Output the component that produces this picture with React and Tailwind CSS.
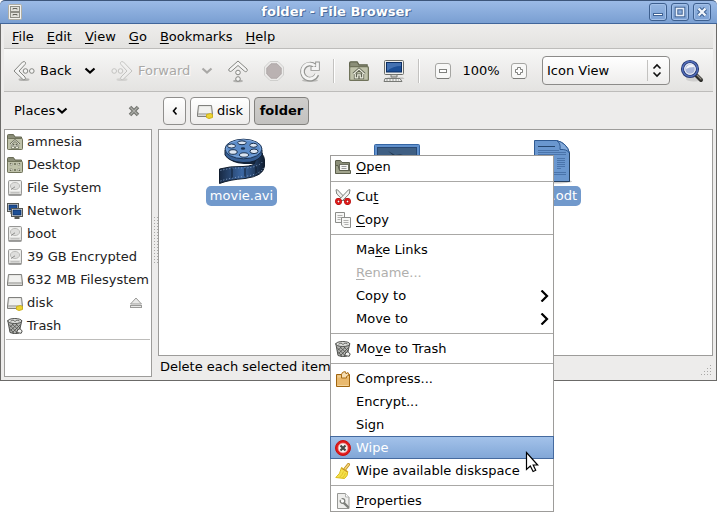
import React from 'react';

const INK = '#555753';

function Chevron({ dir = 'down', className = '' }) {
  const d = dir === 'down' ? 'M1.5 3.5 6 7.5 10.5 3.5' : dir === 'left' ? 'M7.5 2.5 4.500 6 7.5 9.5' : 'M4.500 0.5 10 6 4.500 11.5';
  return (
    <svg width="12" height="12" viewBox="0 0 12 12" fill="none" stroke="currentColor" strokeWidth={dir === 'left' ? 1.6 : 2.2} className={'shrink-0 ' + className}>
      <path d={d} />
    </svg>
  );
}

function ArrowIcon({ flip, faded }) {
  return (
    <svg width="24" height="24" viewBox="0 0 24 24" className={'shrink-0 ' + (flip ? '-scale-x-100 ' : '') + (faded ? 'opacity-40' : '')}>
      <ellipse cx="12" cy="20.5" rx="5.500" ry="1.500" fill="#8f8f8c" opacity=".6" />
      <path d="M2 12 10.500 3Q12.500 1.800 13.500 3.500 13.800 4.800 13 5.500L7 12 13 18Q14 19.500 12.800 20.500 11.500 21 10.500 20Z" fill="#f4f4f3" stroke="#858682" strokeLinejoin="round" />
      <circle cx="13.500" cy="12" r="2.300" fill="#f4f4f3" stroke="#858682" />
      <circle cx="19.800" cy="12" r="2.300" fill="#f4f4f3" stroke="#858682" />
    </svg>
  );
}

function UpIcon() {
  return (
    <svg width="22" height="24" viewBox="0 0 22 24">
      <ellipse cx="11" cy="22" rx="5" ry="1.300" fill="#8f8f8c" opacity=".6" />
      <path d="M11 2 20 10Q20.800 12 19.500 12.600 18.300 13 17.300 12L11 6.500 4.700 12Q3.200 13 2.200 12 1.300 11 2 10Z" fill="#f4f4f3" stroke="#858682" strokeLinejoin="round" />
      <circle cx="11" cy="13.500" r="2.300" fill="#f4f4f3" stroke="#858682" />
      <circle cx="11" cy="20" r="2.300" fill="#f4f4f3" stroke="#858682" />
    </svg>
  );
}

function StopIcon() {
  return (
    <svg width="20" height="24" viewBox="0 0 20 24">
      <path d="M6 2.500h8l5.500 5.500v8L14 21.500H6L.5 16V8Z" fill="#ecebea" stroke="#cfcfcd" />
      <path d="M7 4.800h6l4.200 4.200v6L13 19.200H7L2.800 15V9Z" fill="#bab2b2" stroke="#b0a9a9" />
    </svg>
  );
}

function ReloadIcon() {
  return (
    <svg width="22" height="24" viewBox="0 0 22 24">
      <ellipse cx="11" cy="21.500" rx="8" ry="1.500" fill="#8f8f8c" opacity=".5" />
      <path d="M16 7A7.500 7.500 0 1 0 18 15.500M18.500 2.500v7h-7" fill="none" stroke="#929390" strokeWidth="4.600" />
      <path d="M16 7A7.500 7.500 0 1 0 17.800 15M18.500 3.500v6h-6" fill="none" stroke="#f5f5f4" strokeWidth="2.800" />
    </svg>
  );
}

function FolderShape({ children, size = 16 }) {
  return (
    <svg width={size} height={size} viewBox="0 0 16 16" className="shrink-0">
      <path d="M.5 14.500V1.500Q.5.600 1.400.6h5.100L8 3h6.500v11.500Z" fill="#8b8e78" stroke="#62654f" />
      <rect x=".5" y="4.500" width="15" height="11" rx=".8" fill="#bfc2aa" stroke="#70735b" />
      {children}
    </svg>
  );
}

function HomeFolder({ size }) {
  return (
    <FolderShape size={size}>
      <path d="M3.500 10.500 8 6.500l4.500 4M5 10V13.500h2V11h2v2.500h2V10" fill="none" stroke="#5d6050" strokeWidth="2.200" />
      <path d="M3.500 10.500 8 6.500l4.500 4M5 10V13.500h2V11h2v2.500h2V10" fill="none" stroke="#eceddf" strokeWidth="1" />
    </FolderShape>
  );
}

function DesktopFolder() {
  return (
    <FolderShape>
      <path d="M4 8.500V7h1.500M10.500 7H12v1.500M12 11.500V13h-1.500M5.500 13H4v-1.500M7.300 7h1.400M7.300 13h1.400" fill="none" stroke="#62654f" strokeWidth="2.200" />
      <path d="M4 8.500V7h1.500M10.500 7H12v1.500M12 11.500V13h-1.500M5.500 13H4v-1.500" fill="none" stroke="#f0f1e6" />
    </FolderShape>
  );
}

function HardDisk() {
  return (
    <svg width="16" height="16" viewBox="0 0 16 16" className="shrink-0">
      <rect x="1.500" y=".5" width="13" height="14.500" rx="1.200" fill="#e2e2e0" stroke="#979795" />
      <rect x="2.500" y="1.500" width="11" height="9.500" fill="#f3f3f1" />
      <ellipse cx="8" cy="6" rx="4.600" ry="3.600" fill="#dededc" stroke="#bcbcb9" />
      <path d="M4 9.500 8 6.800" stroke="#8c8c8a" />
      <path d="M1.500 15h13" stroke="#747472" />
      <path d="M3.500 12.800h9" stroke="#b5b5b2" />
    </svg>
  );
}

function Drive({ usb }) {
  return (
    <svg width="16" height="16" viewBox="0 0 16 16" className="shrink-0">
      <path d="M1.500 2.500h13l1 8.500v2.500h-15V11Z" fill="#d8d8d5" stroke="#80807d" />
      <path d="M2.500 3.500h11l.6 6.500H1.900Z" fill="#f1f1ef" />
      <path d="M1 11h14" stroke="#a2a29f" />
      {usb && <path d="M9.500 11.500 13.500 10.500 15.500 11.500v3L12 15.500 9.500 14.500Z" fill="#ecd433" stroke="#cdb01c" />}
    </svg>
  );
}

function Screen({ x, y }) {
  return (
    <g transform={`translate(${x} ${y})`}>
      <rect x=".5" y=".5" width="11" height="8" fill="#e8e8e4" stroke={INK} />
      <rect x="2" y="2" width="8" height="5" fill="#1d4f96" stroke="#0c2e62" strokeWidth=".8" />
      <path d="M3.500 10h5" stroke={INK} strokeWidth="2" />
    </g>
  );
}

function NetworkIcon() {
  return (
    <svg width="16" height="16" viewBox="0 0 16 16" className="shrink-0">
      <Screen x={0} y={0} />
      <Screen x={4} y={5} />
    </svg>
  );
}

function ComputerIcon() {
  return (
    <svg width="22" height="24" viewBox="0 0 22 24">
      <path d="M4 18.500h16l1.500 1.500H7Z" fill="#a4a4a1" opacity=".6" />
      <rect x="1.500" y="1.500" width="19" height="14" rx="1" fill="#eeeeec" stroke="#6b6d69" />
      <rect x="3.500" y="3.500" width="15" height="9.500" fill="#1c4f97" stroke="#0d2f63" />
      <path d="M4 4h14v3Q10 7 4 12Z" fill="#5d88c4" opacity=".6" />
      <path d="M8 15.500h6v2.500H8Z" fill="#cfcfcc" stroke="#777975" />
      <path d="M2 19.500h15l2 3H1Z" fill="#eeeeec" stroke="#777975" />
      <path d="M3 21h13" stroke="#999b97" strokeDasharray="2 1" />
    </svg>
  );
}

function TrashIcon() {
  return (
    <svg width="16" height="16" viewBox="0 0 16 16" className="shrink-0">
      <path d="M.8 2.500 3 14.500Q8 16.800 12 15L14.800 2.500Z" fill="#b4b5b2" stroke="#50514e" />
      <path d="M2 6.500l8 8M3 10.500l4 5M5 6l7 6.500M9 6l4 4M13.500 6.500l-8 8M10.500 6l-7 6.500M6.500 6l-4 3.500M13 10.500l-4 4.500" stroke="#4a4b48" strokeWidth=".8" />
      <ellipse cx="7.800" cy="3" rx="7" ry="2.500" fill="#dedfdc" stroke="#50514e" />
      <path d="M3.500 3.200 6 2l2 1.500 2-1.500 2.500 1" fill="none" stroke="#6b6c69" />
      <path d="M9.500 14.500l1.500-3 2-.8 2.200 2.300-1 2.300Z" fill="#f2f2f0" stroke="#50514e" />
    </svg>
  );
}

function EjectIcon() {
  return (
    <svg width="14" height="12" viewBox="0 0 14 12" fill="#e9e9e8" stroke="#9b9b99">
      <path d="M7 1 12.500 7h-11Z" />
      <rect x="1.500" y="8.500" width="11" height="2" />
    </svg>
  );
}

function SearchIcon() {
  return (
    <svg width="24" height="24" viewBox="0 0 24 24">
      <ellipse cx="14" cy="20" rx="8" ry="2.500" fill="#aaa" opacity=".4" />
      <path d="M16 16l5 5" stroke="#2e2e2b" strokeWidth="4" strokeLinecap="round" />
      <path d="M17 16l4 4" stroke="#8d8a82" strokeWidth="1.200" strokeLinecap="round" />
      <circle cx="10" cy="10" r="7.500" fill="#cfd8ec" stroke="#26386f" strokeWidth="3.200" />
      <circle cx="10" cy="10" r="7.500" fill="none" stroke="#5470bd" strokeWidth="1.400" />
      <circle cx="10" cy="10" r="5.200" fill="#a9b6da" stroke="#e8ecf6" />
      <path d="M6 10Q6 6 11 5.500 14 6 14 8 9 8 6 10Z" fill="#fff" opacity=".85" />
    </svg>
  );
}

function ZoomSign({ plus }) {
  return (
    <svg width="16" height="16" viewBox="0 0 16 16">
      <rect x=".5" y=".5" width="15" height="15" rx="2.500" fill="#f8f8f7" stroke="#a5a5a2" />
      <path d="M2 15.500h12" stroke="#7c7c79" />
      {plus ? (
        <path d="M6.500 4.500h3v2h2v3h-2v2h-3v-2h-2v-3h2Z" fill="#fff" stroke="#80817e" />
      ) : (
        <rect x="4.500" y="6.500" width="7" height="3" fill="#fff" stroke="#80817e" />
      )}
    </svg>
  );
}

function CabinetIcon() {
  return (
    <svg width="16" height="16" viewBox="0 0 16 16" className="shrink-0">
      <rect x="1.500" y=".5" width="13" height="15" rx="1.200" fill="#f4f4f0" stroke="#b0aea4" />
      <rect x="3.500" y="2.500" width="9" height="5" fill="#e2e2dc" stroke="#8f8f87" />
      <rect x="3.500" y="8.500" width="9" height="5" fill="#e2e2dc" stroke="#8f8f87" />
      <path d="M6 5.500v-1h4v1M6 11.500v-1h4v1" fill="none" stroke="#66665f" />
    </svg>
  );
}

function OpenIcon() {
  return (
    <svg width="16" height="16" viewBox="0 0 16 16">
      <path d="M.5 14V2Q.5 1.500 1 1.500h4.500L7 3.500h7.500V14Z" fill="#8b8e78" stroke="#5c5f4d" />
      <rect x="4.500" y="5.500" width="9" height="7" fill="#f7f7f4" stroke="#6c6e60" />
      <path d="M6.500 7.500h5M6.500 9.500h5" stroke="#999" />
      <path d="M.5 14.500V6.500h2.500l1.500 5h11v3Z" fill="#a1a48d" stroke="#5c5f4d" />
    </svg>
  );
}

function CutIcon() {
  return (
    <svg width="16" height="16" viewBox="0 0 16 16">
      <path d="M1 .8 2.500.8 11 9.800 9 12 1.800 5Z" fill="#eeeeec" stroke="#7f817d" />
      <path d="M15 .8 13.500.8 5 9.800 7 12 14.200 5Z" fill="#f5f5f4" stroke="#7f817d" />
      <circle cx="3.500" cy="12.500" r="2.200" fill="#fff" stroke="#a40000" strokeWidth="2.400" />
      <circle cx="12.500" cy="12.500" r="2.200" fill="#fff" stroke="#a40000" strokeWidth="2.400" />
      <circle cx="3.500" cy="12.500" r="2.200" fill="none" stroke="#e21c1c" strokeWidth="1.600" />
      <circle cx="12.500" cy="12.500" r="2.200" fill="none" stroke="#e21c1c" strokeWidth="1.600" />
    </svg>
  );
}

function CopyIcon() {
  return (
    <svg width="16" height="16" viewBox="0 0 16 16" fill="#f7f7f6" stroke="#8b8c89">
      <path d="M.5.5h9v10h-9Z" />
      <path d="M2.500 3.500h5M2.500 5.500h5M2.500 7.500h3" stroke="#b1b1af" />
      <path d="M6.500 5.500h9v10H9l-2.500-2.500Z" />
      <path d="M8.500 8.500h5M8.500 10.500h5M9.500 12.500h4" stroke="#b1b1af" />
    </svg>
  );
}

function CompressIcon() {
  return (
    <svg width="16" height="16" viewBox="0 0 16 16">
      <path d="M1.500 3.500h13v12h-13Z" fill="#e9b96e" stroke="#a0650f" />
      <path d="M2.500 4.500h11v2h-11Z" fill="#f0cd90" />
      <path d="M6.500 7V3.500Q7 1 9 .8h1.500l.5 2 2-1.300 1 2.500L11.500 5.500V7Z" fill="#f6dfb6" stroke="#a96d14" />
      <path d="M2.500 14.500h11" stroke="#f3d49b" />
    </svg>
  );
}

function WipeIcon() {
  return (
    <svg width="16" height="16" viewBox="0 0 16 16">
      <circle cx="8" cy="8" r="7.500" fill="#e01b1b" stroke="#c81010" />
      <circle cx="8" cy="8" r="4.900" fill="#f5f5f4" stroke="#f38a8a" strokeWidth=".8" />
      <path d="M5.500 5.500l5 5M10.500 5.500l-5 5" stroke="#484a47" strokeWidth="2.200" />
    </svg>
  );
}

function BroomIcon() {
  return (
    <svg width="16" height="16" viewBox="0 0 16 16">
      <path d="M10 6 13.500 1.500" stroke="#c08f24" strokeWidth="3" strokeLinecap="round" />
      <path d="M10 6 13.500 1.500" stroke="#f5d77c" strokeWidth="1.400" strokeLinecap="round" />
      <path d="M6.500 4.500 12.800 8.500Q13 13 9.500 15.500L.8 14.500Q5.500 11 6.500 4.500Z" fill="#f5e04a" stroke="#d9bb18" />
      <path d="M8.500 8.500Q7.500 12 4.500 14.300M10.500 10Q9.500 13 7.500 15" fill="none" stroke="#e2c628" />
      <path d="M6.500 5.300 12.500 9" stroke="#c07a2a" strokeWidth=".9" />
    </svg>
  );
}

function PropertiesIcon() {
  return (
    <svg width="16" height="16" viewBox="0 0 16 16">
      <path d="M2.500.5h8l3.500 3.500v11.500h-11.500Z" fill="#eeeeec" stroke="#969794" />
      <path d="M10.500.5v3.500h3.500" fill="#fff" stroke="#b1b2b0" />
      <path d="M8.800 9.800 13 14" stroke="#7e807c" strokeWidth="2.400" strokeLinecap="round" />
      <circle cx="7.500" cy="8" r="2.300" fill="#fff" stroke="#7e807c" strokeWidth="1.300" />
      <path d="M5 5l2 2.500" stroke="#eeeeec" strokeWidth="1.600" />
    </svg>
  );
}

function MovieIcon() {
  return (
    <svg width="48" height="48" viewBox="0 0 48 48">
      <defs>
        <linearGradient id="film" x1="0" x2="1">
          <stop offset="0" stopColor="#182a44" />
          <stop offset=".5" stopColor="#3c68a4" />
          <stop offset="1" stopColor="#101d30" />
        </linearGradient>
      </defs>
      <path d="M8 13v6q5 7 18 8l12 0 6-7 1-4Z" fill="#14243a" />
      <path d="M38 13Q46 16 46.500 23v6Q46 39 27 41.500 12 42.500 1.500 46.500V32Q12 29 25 29.500 37 29 37 25Z" fill="url(#film)" stroke="#111d2e" />
      <path d="M2.500 33.500Q13 30.500 26 31 41 30.500 45 24M2.500 44Q13 40.500 26 39.500 42 37.500 45.500 31" fill="none" stroke="#8fa9cc" strokeDasharray="1 2" />
      <path d="M14 31v10M27 31v9M38 29v8" stroke="#0f1c2e" />
      <path d="M7 13v5q4 7 18 7.500T44 18v-5Z" fill="#375f95" stroke="#122035" />
      <ellipse cx="25.500" cy="12" rx="18.500" ry="9.800" fill="#5c8cc9" stroke="#1d3556" />
      <ellipse cx="25.500" cy="11.500" rx="17" ry="8.500" fill="none" stroke="#80a8db" />
      <g fill="#dce6f3" stroke="#1b3251">
        <ellipse cx="24" cy="5.800" rx="4.300" ry="1.900" />
        <ellipse cx="35.500" cy="8.300" rx="3.800" ry="2" />
        <ellipse cx="36" cy="14.300" rx="4" ry="2.300" />
        <ellipse cx="26" cy="18" rx="4.500" ry="2.200" />
        <ellipse cx="15" cy="15" rx="4.200" ry="2.300" />
        <ellipse cx="13.500" cy="9" rx="4" ry="2" />
      </g>
      <ellipse cx="25" cy="11.500" rx="2.200" ry="1.200" fill="#1b3251" />
    </svg>
  );
}

function ImageIcon() {
  return (
    <svg width="48" height="48" viewBox="0 0 48 48">
      <rect x="1.500" y="7.500" width="45" height="36" rx="1" fill="#6090cc" stroke="#3465a4" />
      <rect x="4.500" y="10.500" width="39" height="30" fill="#3f5f83" stroke="#274874" />
      <path d="M15 14l7 4 8-1-8 3Z" fill="#22384f" />
    </svg>
  );
}

function DocumentIcon() {
  return (
    <svg width="48" height="48" viewBox="0 0 48 48">
      <ellipse cx="25" cy="44.500" rx="19" ry="2" fill="#999" opacity=".5" />
      <path d="M6.500 3.500h22Q39 6 41.500 16v28.500h-35Z" fill="#6a97cf" stroke="#2f5a92" strokeLinejoin="round" />
      <path d="M28.500 3.500Q33 6 32 12.500 39 12 41.500 16 39 6 28.500 3.500Z" fill="#83aadb" stroke="#2f5a92" />
      <path d="M41.500 16v28.500h-35" fill="none" stroke="#26405f" />
      <path d="M10 9.500h17" stroke="#25466f" />
      <path d="M10 13.500h21M10 15.500h28M10 17.500h28M10 21.500h16M10 24.500h16M29 21.500h8M29 23.500h8M29 25.500h8M29 27.500h8M29 29.500h8M29 31.500h4M10 35.500h28M10 37.500h28" stroke="#4a74ab" />
    </svg>
  );
}

function Mnemonic({ text, at = 0 }) {
  if (at < 0) return <span>{text}</span>;
  return (
    <span>
      {text.slice(0, at)}
      <span className="underline underline-offset-2">{text[at]}</span>
      {text.slice(at + 1)}
    </span>
  );
}

function WindowButton({ label, children }) {
  return (
    <button aria-label={label} className="flex size-[18px] items-center justify-center rounded-[3px] border border-[#3d5f8f] bg-linear-to-b from-[#94b5e1] to-[#7ca1d4] shadow-[inset_0_0_0_1px_#a3c0e8]">
      <svg width="12" height="12" viewBox="0 0 12 12">{children}</svg>
    </button>
  );
}

function TitleBar() {
  return (
    <header className="flex h-6 items-center rounded-t-[5px] border-b border-t border-b-[#41669b] border-t-[#3c557a] bg-linear-to-b from-[#9bbae6] to-[#7a9fd2] pl-[7px] pr-[6px]">
      <CabinetIcon />
      <h1 className="flex-1 text-center text-[13px] font-bold text-white [text-shadow:1px_1px_0_#4a6c9c,-1px_0_0_#6286b8]">folder - File Browser</h1>
      <div className="flex gap-1">
        <WindowButton label="Minimize"><rect x="1.500" y="7.500" width="9" height="2" fill="#fff" stroke="#3f6294" /></WindowButton>
        <WindowButton label="Maximize">
          <rect x="2.500" y="2.500" width="7" height="7" fill="none" stroke="#3f6294" strokeWidth="3.600" />
          <rect x="2.500" y="2.500" width="7" height="7" fill="none" stroke="#e9f0f9" strokeWidth="1.600" />
        </WindowButton>
        <WindowButton label="Close">
          <path d="M2.500 2.500l7 7M9.500 2.500l-7 7" stroke="#3f6294" strokeWidth="4.400" />
          <path d="M2.500 2.500l7 7M9.500 2.500l-7 7" stroke="#f2f6fb" strokeWidth="2.400" />
        </WindowButton>
      </div>
    </header>
  );
}

const menus = ['File', 'Edit', 'View', 'Go', 'Bookmarks', 'Help'];

function MenuBar() {
  return (
    <nav className="flex h-[25px] items-center gap-[13px] border-b border-[#bdbcba] bg-linear-to-b from-[#eeedec] to-[#e3e2e0] px-2 pt-[2px]">
      {menus.map((m) => <button key={m}><Mnemonic text={m} /></button>)}
    </nav>
  );
}

function Separator() {
  return <div className="h-6 w-[2px] border-l border-r border-l-[#c3c2c0] border-r-white" />;
}

function Toolbar() {
  return (
    <div className="flex h-[43px] items-center border-b border-[#bdbcba] bg-linear-to-b from-[#f7f7f6] to-[#e4e3e1] pl-2 pr-[9px] pt-px">
      <button className="flex w-[62px] items-center gap-1"><ArrowIcon />Back</button>
      <button aria-label="Back history" className="ml-[10px]"><Chevron /></button>
      <button disabled className="ml-[14px] flex w-[80px] items-center gap-1 text-[#a9a8a6] [text-shadow:1px_1px_0_#fff]"><ArrowIcon flip faded />Forward</button>
      <button disabled aria-label="Forward history" className="ml-[11px] text-[#a9a8a6]"><Chevron /></button>
      <div className="ml-[14px] flex items-center gap-[15px]">
        <button aria-label="Up"><UpIcon /></button>
        <button aria-label="Stop" disabled><StopIcon /></button>
        <button aria-label="Reload"><ReloadIcon /></button>
      </div>
      <div className="ml-[12px] flex items-center gap-[14px]">
        <Separator />
        <button aria-label="Home"><HomeFolder size={20} /></button>
        <button aria-label="Computer"><ComputerIcon /></button>
      </div>
      <div className="ml-[13px] flex items-center">
        <Separator />
        <button aria-label="Zoom out" className="ml-[15px]"><ZoomSign /></button>
        <span className="w-[60px] text-center">100%</span>
        <button aria-label="Zoom in"><ZoomSign plus /></button>
      </div>
      <div className="relative ml-auto h-[29px] w-[128px]">
        <select aria-label="View as" defaultValue="Icon View" className="h-full w-full appearance-none rounded-[4px] border border-[#8c8b89] bg-linear-to-b from-white to-[#eeedec] pl-1 outline-none">
          <option>Icon View</option>
          <option>List View</option>
          <option>Compact View</option>
        </select>
        <svg width="24" height="22" viewBox="0 0 24 22" fill="none" className="pointer-events-none absolute right-0 top-1">
          <path d="M1.500 0v21" stroke="#c3c2c0" />
          <path d="M7.500 8.500 11 5l3.500 3.500M7.500 12.500 11 16l3.500-3.500" stroke="#111" strokeWidth="1.600" />
        </svg>
      </div>
      <button aria-label="Search" className="ml-[10px]"><SearchIcon /></button>
    </div>
  );
}

const places = [
  ['amnesia', <HomeFolder />],
  ['Desktop', <DesktopFolder />],
  ['File System', <HardDisk />],
  ['Network', <NetworkIcon />],
  ['boot', <HardDisk />],
  ['39 GB Encrypted', <HardDisk />],
  ['632 MB Filesystem', <Drive />],
  ['disk', <Drive usb />],
  ['Trash', <TrashIcon />],
];

function Sidebar() {
  return (
    <aside className="flex w-[148px] shrink-0 flex-col">
      <div className="flex h-[37px] items-center pl-[10px] pr-3">
        <button className="flex items-center gap-px">Places<Chevron /></button>
        <button aria-label="Close side pane" className="ml-auto">
          <svg width="12" height="12" viewBox="0 0 12 12">
            <path d="M2 2l8 8M10 2l-8 8" stroke="#73746f" strokeWidth="3.600" />
            <path d="M2.500 2.500l7 7M9.500 2.500l-7 7" stroke="#adaea9" strokeWidth="1.200" />
          </svg>
        </button>
      </div>
      <div className="min-h-[248px] flex-1 border border-[#9d9c9a] bg-white px-px text-[#222]">
        <ul>
          {places.map(([name, icon]) => (
            <li key={name} className="flex h-[23px] items-center pl-px">
              <button className="flex items-center gap-1 whitespace-nowrap">{icon}{name}</button>
              {name === 'disk' && <button aria-label="Eject disk" className="ml-auto pr-[7px]"><EjectIcon /></button>}
            </li>
          ))}
        </ul>
        <hr className="mt-[2px] border-[#bdbcba]" />
      </div>
    </aside>
  );
}

function PathBar() {
  const base = 'flex h-[28px] items-center justify-center rounded-[4px] border ';
  return (
    <div className="flex h-[37px] items-center gap-1 pl-[5px]">
      <button aria-label="Scroll path" className={base + 'w-[23px] border-[#8f8e8c] bg-linear-to-b from-white to-[#eeedec]'}><Chevron dir="left" /></button>
      <button className={base + 'w-[60px] gap-1 border-[#8f8e8c] bg-linear-to-b from-white to-[#eeedec]'}><Drive usb />disk</button>
      <button className={base + 'w-[55px] border-[#83827f] bg-linear-to-b from-[#cfcecc] to-[#c3c2c0] font-bold'}>folder</button>
    </div>
  );
}

const files = [
  { id: 'movie', name: 'movie.avi', icon: <MovieIcon /> },
  { id: 'image', icon: <ImageIcon /> },
  { id: 'text', name: 'text.odt', icon: <DocumentIcon /> },
];

function FilePane() {
  return (
    <div className="min-h-[227px] flex-1 border border-[#9d9c9a] bg-white pl-[5px] pt-[7px]">
      <ul className="flex">
        {files.map((f) => (
          <li key={f.id} className="flex w-[155px] flex-col items-center gap-px">
            {f.icon}
            {f.name && <span className="flex h-[20px] items-center rounded-[5px] bg-[#7199cc] px-1 text-white">{f.name}</span>}
          </li>
        ))}
      </ul>
    </div>
  );
}

function Grip() {
  return (
    <svg width="12" height="12" viewBox="0 0 12 12" className="self-end" fill="#a9a8a6">
      {[0, 1, 2, 3].map((r) => [0, 1, 2, 3].filter((c) => c >= 3 - r).map((c) => <rect key={r + '-' + c} x={c * 3} y={r * 3} width="1" height="1" />))}
    </svg>
  );
}

function SplitHandle() {
  return (
    <div className="flex w-[6px] shrink-0 items-center justify-center pt-[9px]">
      <div className="h-[47px] w-[5px] bg-[radial-gradient(circle,#a9a8a6_0.700px,transparent_0.800px)] bg-[size:3px_3px]" />
    </div>
  );
}

const groups = [
  [{ t: 'Open', u: 0, icon: <OpenIcon /> }],
  [{ t: 'Cut', u: 2, icon: <CutIcon /> }, { t: 'Copy', u: 0, icon: <CopyIcon /> }],
  [{ t: 'Make Links', u: 2 }, { t: 'Rename...', u: 0, off: true }, { t: 'Copy to', sub: true }, { t: 'Move to', sub: true }],
  [{ t: 'Move to Trash', u: 2, icon: <TrashIcon /> }],
  [
    { t: 'Compress...', icon: <CompressIcon /> },
    { t: 'Encrypt...' },
    { t: 'Sign' },
    { t: 'Wipe', icon: <WipeIcon />, on: true },
    { t: 'Wipe available diskspace', icon: <BroomIcon /> },
  ],
  [{ t: 'Properties', u: 0, icon: <PropertiesIcon /> }],
];

function MenuItem({ item }) {
  const tone = item.on
    ? '-mx-px border-[#456a9f] bg-linear-to-b from-[#a3c2ea] to-[#82a7d7] text-white'
    : 'border-transparent ' + (item.off ? 'text-[#b0afad]' : '');
  return (
    <button role="menuitem" disabled={item.off} className={'flex h-[23px] items-center border text-left ' + (item.on ? 'px-1 ' : 'px-[3px] ') + tone}>
      <span className="mr-[5px] size-4 shrink-0">{item.icon}</span>
      <Mnemonic text={item.t} at={item.u ?? -1} />
      {item.sub && <Chevron dir="right" className="ml-auto" />}
    </button>
  );
}

function ContextMenu() {
  return (
    <div role="menu" className="absolute left-[330px] top-[155px] flex w-[224px] flex-col border border-[#9d9c9a] bg-white [&>*:first-child]:-mt-px [&>*:last-child]:-mb-px">
      {groups.map((g, i) => (
        <React.Fragment key={i}>
          {i > 0 && <hr className="my-[3px] border-[#a9a8a6]" />}
          {g.map((item) => <MenuItem key={item.t} item={item} />)}
        </React.Fragment>
      ))}
    </div>
  );
}

function Pointer() {
  return (
    <svg width="14" height="22" viewBox="0 0 14 22" className="pointer-events-none absolute left-[525px] top-[451px]">
      <path d="M1.500 1.500v17l3.800-3.500 2.800 5.500 2.600-1.200-2.500-5.300h4.500Z" fill="#fff" stroke="#000" strokeWidth="1.200" />
    </svg>
  );
}

export default function App() {
  return (
    <div className="relative min-h-screen bg-white font-['DejaVu_Sans',sans-serif] text-[13px] leading-4 text-black">
      <main>
        <TitleBar />
        <div className="border-b border-l border-r border-[#6b6a68] bg-[#edeceb] pl-[3px] pr-[3px]">
          <MenuBar />
          <Toolbar />
          <div className="flex pb-[3px]">
            <Sidebar />
            <SplitHandle />
            <section className="flex min-w-0 flex-1 flex-col">
              <PathBar />
              <FilePane />
              <footer className="flex h-[21px] items-center justify-between pl-[2px]">
                <span>Delete each selected item</span>
                <Grip />
              </footer>
            </section>
          </div>
        </div>
      </main>
      <ContextMenu />
      <Pointer />
    </div>
  );
}
